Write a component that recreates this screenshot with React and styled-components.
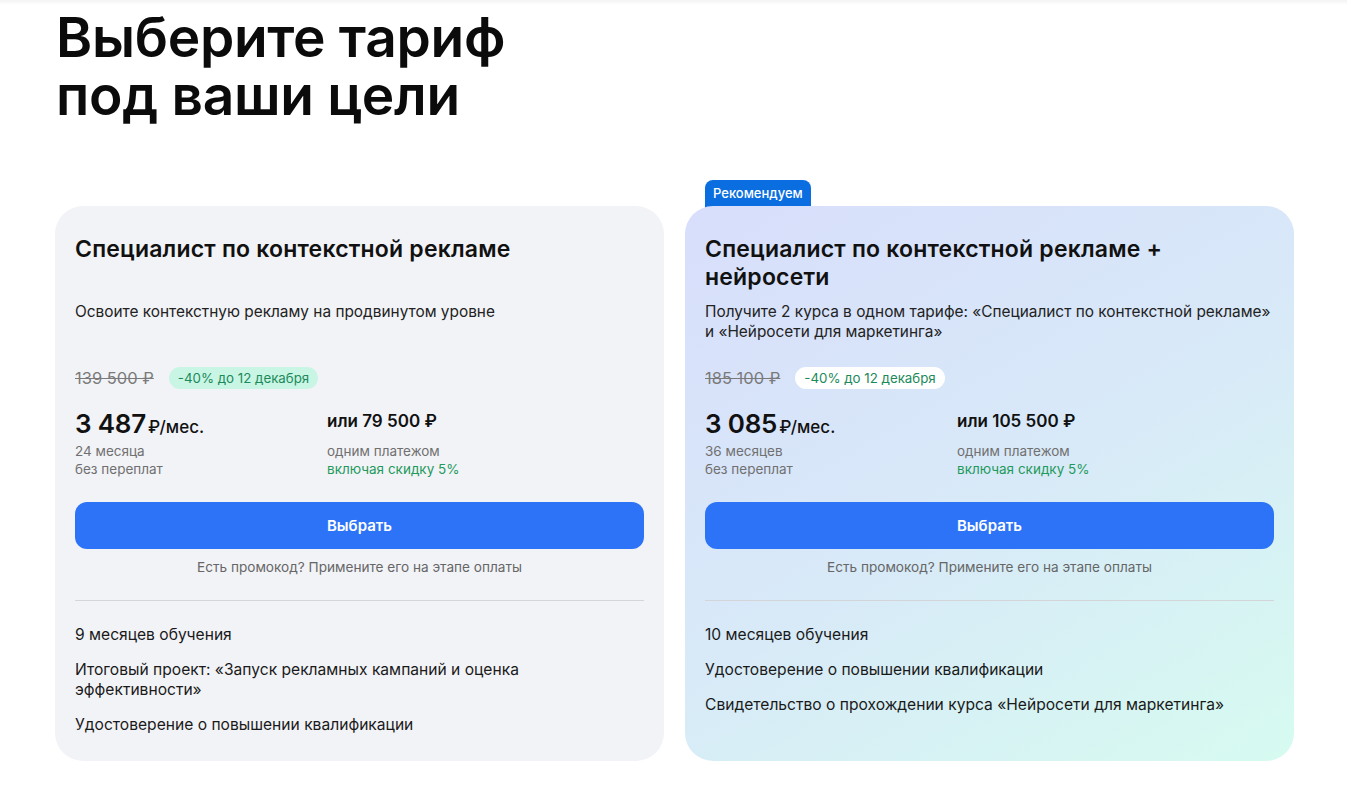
import React from 'react'
import styled, { createGlobalStyle } from 'styled-components'

const GlobalStyle = createGlobalStyle`
  * {
    box-sizing: border-box;
  }
  body {
    margin: 0;
    background: #fff;
    font-family: Inter, 'Noto Sans', sans-serif;
    color: #111;
  }
`

const Page = styled.div`
  position: relative;
  width: 1347px;
  min-height: 802px;
  padding: 8px 0 0 55px;
  box-shadow: inset 0 5px 4px -3px rgba(0, 0, 0, 0.06);
`

const Title = styled.h1`
  margin: 0 0 0 1px;
  font-size: 55px;
  line-height: 58px;
  font-weight: 600;
  letter-spacing: -0.3px;
  color: #0b0b0b;
`

const Cards = styled.div`
  display: grid;
  grid-template-columns: 609px 609px;
  column-gap: 21px;
  margin-top: 82px;
  align-items: stretch;
`

const CardWrap = styled.div`
  position: relative;
  display: flex;
  flex-direction: column;
`

const Badge = styled.div`
  position: absolute;
  left: 20px;
  top: -26px;
  height: 30px;
  padding: 5px 8px 0;
  background: #0a6ee0;
  color: #fff;
  font-size: 13px;
  font-weight: 500;
  border-radius: 8px 8px 0 0;
`

const Card = styled.div`
  position: relative;
  flex: 1;
  display: flex;
  flex-direction: column;
  padding: 29px 20px 26px;
  border-radius: 28px;
  background: ${p =>
    p.$accent
      ? 'linear-gradient(150deg, #d8defb 0%, #d8e9f8 50%, #d6fbf0 100%)'
      : '#f2f3f7'};
`

const CardTitle = styled.h2`
  margin: 0;
  min-height: 56px;
  font-size: 23px;
  line-height: 28px;
  font-weight: 600;
  letter-spacing: 0.2px;
  color: #111;
`

const Desc = styled.p`
  margin: 11px 0 0;
  min-height: 40px;
  font-size: 15.4px;
  line-height: 20px;
  color: #222;
`

const OldRow = styled.div`
  display: flex;
  align-items: center;
  gap: 15px;
  margin-top: 25px;
`

const OldPrice = styled.span`
  font-size: 16.5px;
  color: #7a7a7a;
  text-decoration: line-through;
`

const Tag = styled.span`
  height: 22px;
  line-height: 22px;
  padding: 0 9px;
  border-radius: 11px;
  font-size: 13.3px;
  color: #1c8a5b;
  background: ${p => (p.$light ? '#fff' : '#c9f5e4')};
`

const Prices = styled.div`
  display: grid;
  grid-template-columns: 252px 1fr;
  margin-top: 19px;
`

const Main = styled.div`
  display: flex;
  align-items: baseline;
  height: 26px;
`

const Big = styled.span`
  font-size: 26px;
  font-weight: 600;
  letter-spacing: -0.2px;
`

const Per = styled.span`
  font-size: 17px;
  font-weight: 500;
  margin-left: 2px;
`

const Total = styled.div`
  font-size: 17px;
  font-weight: 600;
  height: 26px;
  line-height: 26px;
`

const Sub = styled.div`
  margin-top: 8px;
  font-size: 13.5px;
  line-height: 18px;
  color: #707070;
`

const Green = styled.span`
  display: block;
  color: #1f9a5c;
`

const Button = styled.button`
  margin-top: 24px;
  height: 47px;
  width: 100%;
  border: none;
  border-radius: 12px;
  background: #2d73f8;
  color: #fff;
  font-family: inherit;
  font-size: 15px;
  font-weight: 600;
  cursor: pointer;
`

const Promo = styled.div`
  margin-top: 9px;
  text-align: center;
  font-size: 13.6px;
  line-height: 18px;
  color: #666;
`

const Divider = styled.hr`
  margin: 24px 0 0;
  border: none;
  border-top: 1px solid #d4d5d9;
`

const Features = styled.ul`
  list-style: none;
  margin: 24px 0 0;
  padding: 0;
  display: flex;
  flex-direction: column;
  gap: 15px;
`

const Feature = styled.li`
  font-size: 15.6px;
  line-height: 20px;
  color: #1a1a1a;
`

const plans = [
  {
    title: 'Специалист по контекстной рекламе',
    desc: 'Освоите контекстную рекламу на продвинутом уровне',
    old: '139 500 ₽',
    monthly: '3 487',
    months: '24 месяца',
    total: 'или 79 500 ₽',
    features: [
      '9 месяцев обучения',
      'Итоговый проект: «Запуск рекламных кампаний и оценка эффективности»',
      'Удостоверение о повышении квалификации'
    ]
  },
  {
    accent: true,
    title: 'Специалист по контекстной рекламе + нейросети',
    desc: 'Получите 2 курса в одном тарифе: «Специалист по контекстной рекламе» и «Нейросети для маркетинга»',
    old: '185 100 ₽',
    monthly: '3 085',
    months: '36 месяцев',
    total: 'или 105 500 ₽',
    features: [
      '10 месяцев обучения',
      'Удостоверение о повышении квалификации',
      'Свидетельство о прохождении курса «Нейросети для маркетинга»'
    ]
  }
]

const Plan = ({ plan }) => (
  <CardWrap>
    {plan.accent && <Badge>Рекомендуем</Badge>}
    <Card $accent={plan.accent}>
      <CardTitle>{plan.title}</CardTitle>
      <Desc>{plan.desc}</Desc>
      <OldRow>
        <OldPrice>{plan.old}</OldPrice>
        <Tag $light={plan.accent}>-40% до 12 декабря</Tag>
      </OldRow>
      <Prices>
        <div>
          <Main>
            <Big>{plan.monthly}</Big>
            <Per>₽/мес.</Per>
          </Main>
          <Sub>
            {plan.months}
            <br />
            без переплат
          </Sub>
        </div>
        <div>
          <Total>{plan.total}</Total>
          <Sub>
            одним платежом
            <Green>включая скидку 5%</Green>
          </Sub>
        </div>
      </Prices>
      <Button>Выбрать</Button>
      <Promo>Есть промокод? Примените его на этапе оплаты</Promo>
      <Divider />
      <Features>
        {plan.features.map(f => (
          <Feature key={f}>{f}</Feature>
        ))}
      </Features>
    </Card>
  </CardWrap>
)

export default function App() {
  return (
    <>
      <GlobalStyle />
      <Page>
        <Title>
          Выберите тариф
          <br />
          под ваши цели
        </Title>
        <Cards>
          {plans.map(p => (
            <Plan key={p.title} plan={p} />
          ))}
        </Cards>
      </Page>
    </>
  )
}
